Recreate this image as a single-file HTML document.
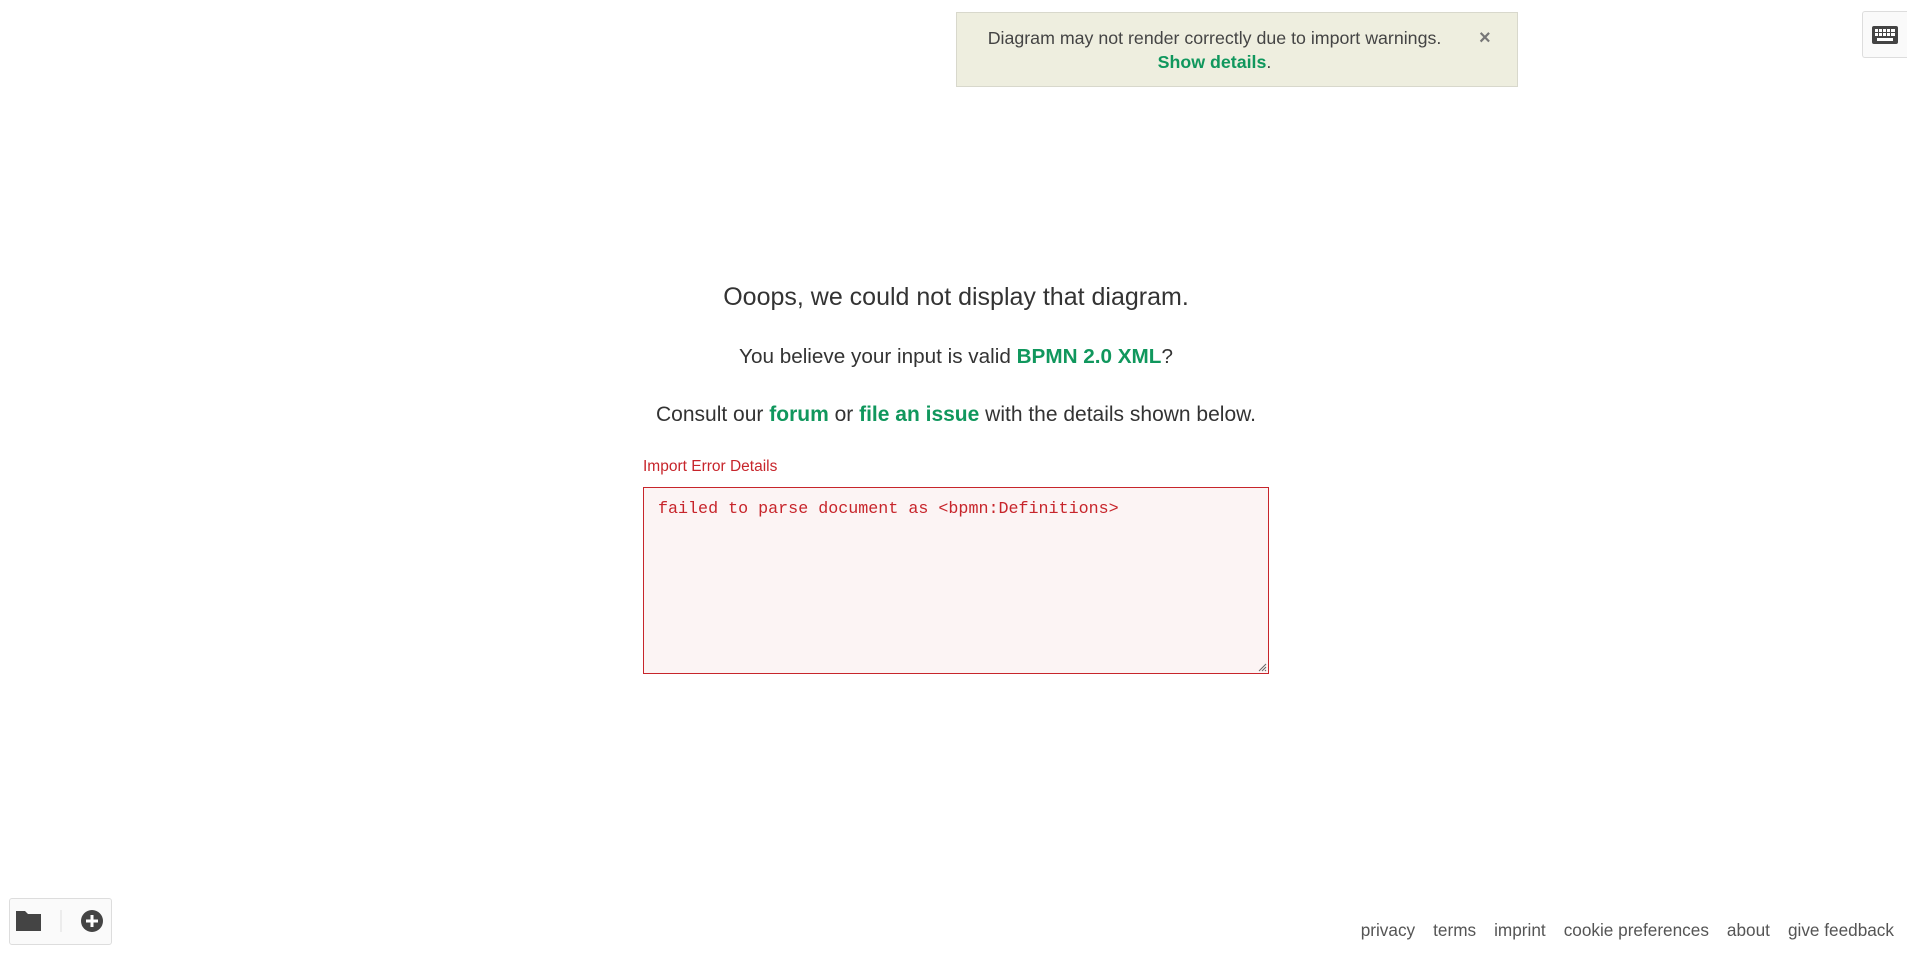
<!DOCTYPE html>
<html><head><meta charset="utf-8"><style>
html,body{margin:0;padding:0;width:1907px;height:957px;background:#fff;overflow:hidden;font-family:"Liberation Sans",sans-serif;color:#444;}
.notif{position:absolute;left:956px;top:12px;width:562px;height:75px;box-sizing:border-box;background:#eeeedf;border:1px solid #d8d8cc;text-align:center;font-size:17.8px;line-height:24px;padding-top:13px;color:#444;}
.notif .t{position:absolute;left:0;width:515px;text-align:center;}
.notif b{color:#10975d;}
.close{position:absolute;left:522px;top:13px;font-size:20px;color:#777;font-weight:bold;}
.kb{position:absolute;left:1862px;top:11px;width:45px;height:47px;box-sizing:border-box;border:1px solid #ddd;border-right:none;background:#fafafa;border-radius:3px 0 0 3px;}
.c{position:absolute;left:0;width:1912px;text-align:center;}
.h{top:283px;font-size:25px;color:#333;}
.p{color:#333;}
.p b{color:#10975d;}
.lbl{position:absolute;left:643px;top:458px;font-size:15.5px;color:#c7252b;}
.ta{position:absolute;left:643px;top:487px;width:626px;height:187px;box-sizing:border-box;border:1px solid #c7252b;background:#fcf4f4;font-family:"Liberation Mono",monospace;font-size:16.7px;color:#c7252b;padding:12px 14px;}
.tb{position:absolute;left:9px;top:898px;width:103px;height:47px;box-sizing:border-box;border:1px solid #ddd;border-radius:3px;background:#fafafa;}
.foot{position:absolute;right:13px;top:920px;font-size:17.2px;color:#555;}
.foot span{margin-left:18px;}
</style></head><body>
<div class="notif"><div class="t">Diagram may not render correctly due to import warnings.<br><b>Show details</b>.</div><span class="close">×</span></div>
<div class="kb"><svg width="45" height="45" viewBox="0 0 45 45"><rect x="9" y="14" width="26" height="18" rx="2" fill="#444"/><g fill="#fff"><rect x="12" y="17" width="3" height="3"/><rect x="16" y="17" width="3" height="3"/><rect x="20" y="17" width="3" height="3"/><rect x="24" y="17" width="3" height="3"/><rect x="28" y="17" width="4" height="3"/><rect x="12" y="21" width="3" height="3"/><rect x="16" y="21" width="3" height="3"/><rect x="20" y="21" width="3" height="3"/><rect x="24" y="21" width="3" height="3"/><rect x="28" y="21" width="4" height="3"/><rect x="14" y="26" width="16" height="3"/></g></svg></div>
<div class="c h">Ooops, we could not display that diagram.</div>
<div class="c p" style="top:345px;font-size:20.7px">You believe your input is valid <b>BPMN 2.0 XML</b>?</div>
<div class="c p" style="top:403px;font-size:21px">Consult our <b>forum</b> or <b>file an issue</b> with the details shown below.</div>
<div class="lbl">Import Error Details</div>
<div class="ta">failed to parse document as &lt;bpmn:Definitions&gt;
<svg style="position:absolute;right:1px;bottom:1px" width="9" height="9"><path d="M8 1L1 8M8 4L4 8M8 7L7 8" stroke="#666" stroke-width="1"/></svg></div>
<div class="tb"><svg width="103" height="47" viewBox="0 0 103 47"><path d="M6 12h9l3 3h13v17H6z" fill="#444"/><line x1="51" y1="11" x2="51" y2="33" stroke="#ddd"/><circle cx="82" cy="22" r="11" fill="#444"/><path d="M82 16v12M76 22h12" stroke="#fff" stroke-width="3"/></svg></div>
<div class="foot">privacy<span>terms</span><span>imprint</span><span>cookie preferences</span><span>about</span><span>give feedback</span></div>
</body></html>
